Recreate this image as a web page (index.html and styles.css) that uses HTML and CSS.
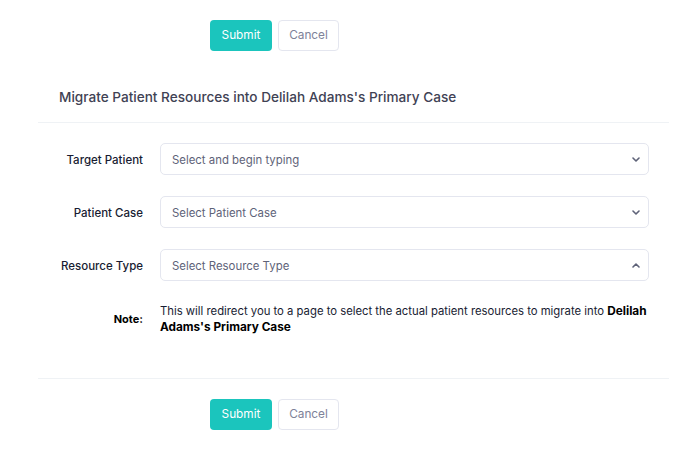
FILE: index.html
```html
<!DOCTYPE html>
<html>
<head>
<meta charset="utf-8">
<link rel="stylesheet" href="styles.css">
</head>
<body>
<div class="actions actions-top">
  <button class="btn btn-submit">Submit</button>
  <button class="btn btn-cancel">Cancel</button>
</div>
<div class="card">
  <div class="card-header">
    <h3 class="card-title">Migrate Patient Resources into Delilah Adams's Primary Case</h3>
  </div>
  <div class="card-body">
    <div class="form-row">
      <label class="form-label">Target Patient</label>
      <div class="select">
        <span class="placeholder">Select and begin typing</span>
        <svg class="chev" width="8" height="5" viewBox="0 0 8 5"><path d="M1 1 L4 4 L7 1" fill="none" stroke="#5e6278" stroke-width="1.6" stroke-linecap="round" stroke-linejoin="round"/></svg>
      </div>
    </div>
    <div class="form-row">
      <label class="form-label">Patient Case</label>
      <div class="select">
        <span class="placeholder">Select Patient Case</span>
        <svg class="chev" width="8" height="5" viewBox="0 0 8 5"><path d="M1 1 L4 4 L7 1" fill="none" stroke="#5e6278" stroke-width="1.6" stroke-linecap="round" stroke-linejoin="round"/></svg>
      </div>
    </div>
    <div class="form-row">
      <label class="form-label">Resource Type</label>
      <div class="select">
        <span class="placeholder">Select Resource Type</span>
        <svg class="chev" width="8" height="5" viewBox="0 0 8 5"><path d="M1 4 L4 1 L7 4" fill="none" stroke="#5e6278" stroke-width="1.6" stroke-linecap="round" stroke-linejoin="round"/></svg>
      </div>
    </div>
    <div class="form-row note-row">
      <span class="note-label">Note:</span>
      <p class="note-text">This will redirect you to a page to select the actual patient resources to migrate into <strong>Delilah Adams's Primary Case</strong></p>
    </div>
  </div>
  <div class="card-footer">
    <div class="actions">
      <button class="btn btn-submit">Submit</button>
      <button class="btn btn-cancel">Cancel</button>
    </div>
  </div>
</div>
</body>
</html>
```
FILE: styles.css
```css
* { box-sizing: border-box; }
body {
  margin: 0;
  background: #ffffff;
  font-family: "Inter", "Noto Sans", sans-serif;
  color: #3f4254;
}
.actions {
  display: flex;
  gap: 6px;
}
.actions-top {
  padding: 20px 0 0 210px;
}
.btn {
  height: 31px;
  padding: 0;
  border-radius: 4px;
  font-family: inherit;
  font-size: 11.8px;
  border: 1px solid transparent;
  line-height: 1;
}
.btn-submit {
  background: #1bc5bd;
  color: #ffffff;
  width: 62px;
}
.btn-cancel {
  background: #ffffff;
  border-color: #e4e6ef;
  color: #7e8299;
  width: 61px;
}
.card {
  margin: 0 19px 0 38px;
}
.card-header {
  padding: 36px 0 15px 21px;
  border-bottom: 1px solid #eff2f5;
}
.card-title {
  margin: 0;
  font-size: 13.6px;
  line-height: 20px;
  font-weight: 500;
  color: #3f4254;
}
.card-body {
  padding: 20px 20px 43px 0;
  display: flex;
  flex-direction: column;
  gap: 21px;
}
.form-row {
  display: grid;
  grid-template-columns: 105px 1fr;
  column-gap: 17px;
  align-items: center;
}
.form-label {
  text-align: right;
  font-size: 11.5px;
  font-weight: 500;
  color: #181c32;
  padding-top: 1px;
}
.select {
  height: 32px;
  border: 1px solid #e4e6ef;
  border-radius: 5px;
  display: flex;
  align-items: center;
  justify-content: space-between;
  padding: 1px 8px 0 11px;
}
.placeholder {
  font-size: 11.4px;
  color: #5e6278;
}
.note-row {
  margin-top: 1px;
}
.note-label {
  text-align: right;
  font-size: 11px;
  font-weight: 700;
  color: #000000;
}
.note-text {
  margin: 0;
  font-size: 11.3px;
  line-height: 16px;
  color: #181c32;
}
.note-text strong {
  color: #000000;
  font-weight: 700;
  font-size: 11.8px;
  line-height: 1;
}
.card-footer {
  border-top: 1px solid #eff2f5;
  padding: 20px 0 0 172px;
}
```
